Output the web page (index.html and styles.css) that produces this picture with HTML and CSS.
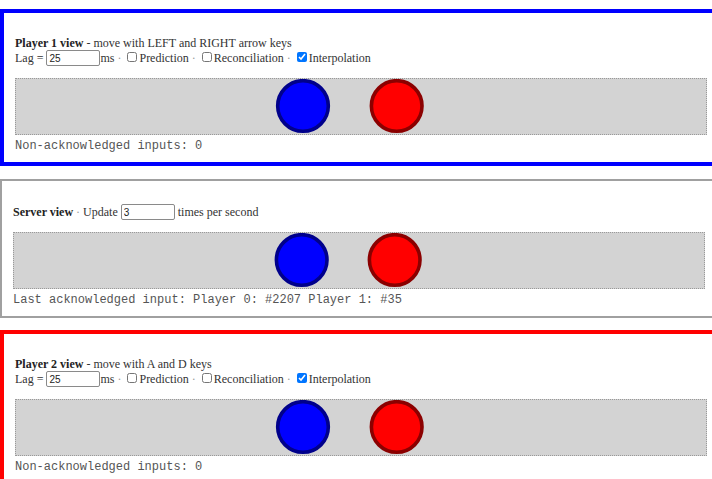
FILE: index.html
```html
<!DOCTYPE html>
<html>
<head>
<meta charset="utf-8">
<link rel="stylesheet" href="styles.css">
</head>
<body>
<div class="view view-p1">
  <p class="controls"><b>Player 1 view</b> - move with LEFT and RIGHT arrow keys<br>Lag = <input class="num" type="text" value="25">ms <span class="sep">·</span> <input class="chk" type="checkbox">Prediction <span class="sep">·</span> <input class="chk" type="checkbox">Reconciliation <span class="sep">·</span> <input class="chk" type="checkbox" checked>Interpolation</p>
  <div class="canvas">
    <svg width="690" height="55" viewBox="0 0 690 55">
      <circle cx="287" cy="27" r="25.3" fill="#0000ff" stroke="#00008b" stroke-width="3.6"/>
      <circle cx="380.7" cy="27" r="25.3" fill="#ff0000" stroke="#8b0000" stroke-width="3.6"/>
    </svg>
  </div>
  <div class="status">Non-acknowledged inputs: 0</div>
</div>
<div class="view view-server">
  <p class="controls"><b>Server view</b> <span class="sep">·</span> Update <input class="num" type="text" value="3"> times per second</p>
  <div class="canvas">
    <svg width="690" height="55" viewBox="0 0 690 55">
      <circle cx="287.7" cy="27" r="25.3" fill="#0000ff" stroke="#00008b" stroke-width="3.6"/>
      <circle cx="380.7" cy="27" r="25.3" fill="#ff0000" stroke="#8b0000" stroke-width="3.6"/>
    </svg>
  </div>
  <div class="status">Last acknowledged input: Player 0: #2207 Player 1: #35</div>
</div>
<div class="view view-p2">
  <p class="controls"><b>Player 2 view</b> - move with A and D keys<br>Lag = <input class="num" type="text" value="25">ms <span class="sep">·</span> <input class="chk" type="checkbox">Prediction <span class="sep">·</span> <input class="chk" type="checkbox">Reconciliation <span class="sep">·</span> <input class="chk" type="checkbox" checked>Interpolation</p>
  <div class="canvas">
    <svg width="690" height="55" viewBox="0 0 690 55">
      <circle cx="287" cy="27" r="25.3" fill="#0000ff" stroke="#00008b" stroke-width="3.6"/>
      <circle cx="380.7" cy="27" r="25.3" fill="#ff0000" stroke="#8b0000" stroke-width="3.6"/>
    </svg>
  </div>
  <div class="status">Non-acknowledged inputs: 0</div>
</div>
</body>
</html>
```
FILE: styles.css
```css
html, body {
  margin: 0;
  overflow: hidden;
}
body {
  padding-top: 9px;
  font-family: "Liberation Serif", "Times New Roman", serif;
  font-size: 12px;
  color: #333;
  background: #fff;
}
.view {
  width: 692px;
  padding: 11px 11px 7px 11px;
}
.view-p1 {
  border: 4px solid #0000ff;
  margin-bottom: 13px;
}
.view-server {
  border: 2px solid #a0a0a0;
  margin-bottom: 12px;
}
.view-p2 {
  border: 4px solid #ff0000;
}
.controls {
  margin: 12px 0;
  line-height: 14px;
}
.controls b {
  color: #222;
}
.sep {
  color: #999;
}
.num {
  box-sizing: border-box;
  width: 54px;
  height: 16px;
  margin: 0;
  padding: 0 2px;
  border: 1px solid #8a8a8a;
  border-radius: 2px;
  font-family: "Liberation Sans", Arial, sans-serif;
  font-size: 10px;
  color: #222;
  vertical-align: baseline;
}
.chk {
  width: 10px;
  height: 10px;
  margin: 0 2px 0 3px;
  vertical-align: baseline;
}
.canvas {
  height: 55px;
  border: 1px dotted #999;
  background: #d3d3d3;
}
.canvas svg {
  display: block;
}
.status {
  padding-top: 2px;
  font-family: "Liberation Mono", "Courier New", monospace;
  font-size: 12px;
  line-height: 18px;
  color: #555;
}
```
